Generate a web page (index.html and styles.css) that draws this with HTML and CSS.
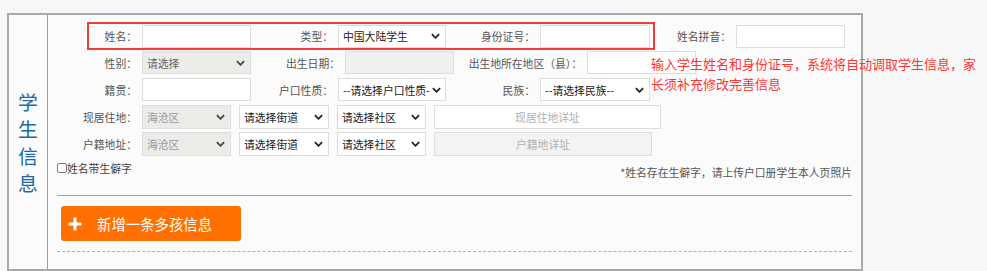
FILE: index.html
```html
<!DOCTYPE html>
<html lang="zh-CN">
<head>
<meta charset="utf-8">
<title>学生信息</title>
<link rel="stylesheet" href="styles.css">
</head>
<body>
<div class="page">
  <div class="panel">
    <div class="side"><span class="side-title">学生信息</span></div>
    <div class="main">
      <div class="row row-1">
        <div class="highlight">
          <label class="lbl w53">姓名：</label><input class="field w109" type="text">
          <label class="lbl w87">类型：</label>
          <div class="sel w108"><span class="sel-text">中国大陆学生</span><svg class="chev" viewBox="0 0 10 6"><path d="M1 1l4 4 4-4"/></svg></div>
          <label class="lbl w94">身份证号：</label><input class="field w110" type="text">
        </div>
        <label class="lbl w81">姓名拼音：</label><input class="field w109" type="text">
      </div>

      <div class="row row-2">
        <label class="lbl w85">性别：</label>
        <div class="sel sel-dis w109"><span class="sel-text">请选择</span><svg class="chev" viewBox="0 0 10 6"><path d="M1 1l4 4 4-4"/></svg></div>
        <label class="lbl w94">出生日期：</label><input class="field field-dis w109" type="text" disabled>
        <label class="lbl w133">出生地所在地区（县）：</label><input class="field w109" type="text">
      </div>

      <div class="row row-3">
        <label class="lbl w85">籍贯：</label><input class="field w109" type="text">
        <label class="lbl w87">户口性质：</label>
        <div class="sel sel-tight w108"><span class="sel-text">--请选择户口性质-</span><svg class="chev" viewBox="0 0 10 6"><path d="M1 1l4 4 4-4"/></svg></div>
        <label class="lbl w94">民族：</label>
        <div class="sel w110"><span class="sel-text">--请选择民族--</span><svg class="chev" viewBox="0 0 10 6"><path d="M1 1l4 4 4-4"/></svg></div>
      </div>

      <div class="row row-4 tall">
        <label class="lbl w85">现居住地：</label>
        <div class="sel sel-dis sel-muted w89"><span class="sel-text">海沧区</span><svg class="chev" viewBox="0 0 10 6"><path d="M1 1l4 4 4-4"/></svg></div>
        <div class="sel w90 gap"><span class="sel-text">请选择街道</span><svg class="chev" viewBox="0 0 10 6"><path d="M1 1l4 4 4-4"/></svg></div>
        <div class="sel w89 gap"><span class="sel-text">请选择社区</span><svg class="chev" viewBox="0 0 10 6"><path d="M1 1l4 4 4-4"/></svg></div>
        <input class="field center w227 gap" type="text" placeholder="现居住地详址">
      </div>

      <div class="row row-5 tall">
        <label class="lbl w85">户籍地址：</label>
        <div class="sel sel-dis sel-muted w89"><span class="sel-text">海沧区</span><svg class="chev" viewBox="0 0 10 6"><path d="M1 1l4 4 4-4"/></svg></div>
        <div class="sel w90 gap"><span class="sel-text">请选择街道</span><svg class="chev" viewBox="0 0 10 6"><path d="M1 1l4 4 4-4"/></svg></div>
        <div class="sel w89 gap"><span class="sel-text">请选择社区</span><svg class="chev" viewBox="0 0 10 6"><path d="M1 1l4 4 4-4"/></svg></div>
        <input class="field field-dis2 center w218 gap" type="text" placeholder="户籍地详址" disabled>
      </div>

      <div class="row-6">
        <label class="check"><input class="checkbox" type="checkbox">姓名带生僻字</label>
        <span class="note">*姓名存在生僻字，请上传户口册学生本人页照片</span>
      </div>

      <div class="divider"></div>

      <button class="add-btn" type="button">
        <svg class="plus" viewBox="0 0 14 14"><path d="M7 0.5v13M0.5 7h13"/></svg>
        <span>新增一条多孩信息</span>
      </button>

      <div class="dashed"></div>
    </div>
    <div class="hint">输入学生姓名和身份证号，系统将自动调取学生信息，家<br>长须补充修改完善信息</div>
  </div>
</div>
</body>
</html>
```

FILE: styles.css
```css
* {
  box-sizing: border-box;
}

html,
body {
  margin: 0;
  padding: 0;
}

body {
  background: #f7f7f7;
  font-family: "Noto Sans CJK SC", "Noto Sans", sans-serif;
  font-size: 10.8px;
  color: #555;
}

.page {
  padding: 13px 0 0 7px;
}

.panel {
  position: relative;
  display: flex;
  width: 856px;
  height: 258px;
  border: 2px solid #aaa;
  background: #fbfbfb;
}

.side {
  width: 39px;
  flex: none;
  border-right: 1px solid #9e9e9e;
  display: flex;
  align-items: center;
  justify-content: center;
}

.side-title {
  width: 20px;
  font-size: 19.8px;
  line-height: 27px;
  color: #1b6aa3;
  text-align: center;
}

.main {
  flex: 1;
  padding: 7px 9px 0 9px;
}

.row {
  display: flex;
  align-items: center;
}

.row-2 { margin-top: 1px; }
.row-3 { margin-top: 4px; }
.row-4 { margin-top: 4px; }
.row-5 { margin-top: 3px; }

.highlight {
  display: flex;
  align-items: center;
  margin-left: 30px;
  height: 28px;
  padding-right: 3px;
  border: 2px solid #f43a3a;
}

.lbl {
  flex: none;
  text-align: right;
  padding-right: 5px;
  line-height: 16px;
  white-space: nowrap;
  color: #555;
}

.w53 { width: 53px; }
.w81 { width: 81px; }
.w85 { width: 85px; }
.w87 { width: 87px; }
.w89 { width: 89px; }
.w90 { width: 90px; }
.w94 { width: 94px; }
.w108 { width: 108px; }
.w109 { width: 109px; }
.w110 { width: 110px; }
.w133 { width: 133px; }
.w218 { width: 218px; }
.w227 { width: 227px; }

.field {
  flex: none;
  height: 23px;
  margin: 0;
  padding: 0 4px;
  border: 1px solid #ddd;
  background: #fff;
  font: inherit;
  color: #222;
  outline: none;
}

.field::placeholder {
  color: #b0b0b0;
}

.field-dis {
  background: #f0f0f0;
}

.field-dis2 {
  background: #f3f3f3;
}

.center {
  text-align: center;
}

.sel {
  flex: none;
  display: flex;
  align-items: center;
  justify-content: space-between;
  height: 23px;
  padding: 0 5px 0 4px;
  border: 1px solid #ddd;
  background: #fff;
  color: #1a1a1a;
  overflow: hidden;
}

.sel-tight {
  padding-right: 4px;
}

.sel-dis {
  background: #ebebe7;
  color: #666;
}

.sel-muted {
  color: #9a9a9a;
}

.sel-text {
  flex: 1;
  min-width: 0;
  white-space: nowrap;
  line-height: 16px;
}

.chev {
  flex: none;
  width: 9px;
  height: 6px;
  fill: none;
  stroke: #222;
  stroke-width: 2;
}

.sel-dis .chev {
  stroke: #444;
}

.tall .sel,
.tall .field {
  height: 24px;
}

.row .gap {
  margin-left: 8px;
}

.row-6 {
  display: flex;
  justify-content: space-between;
  align-items: flex-start;
  margin-top: 4px;
  height: 20px;
}

.check {
  display: flex;
  align-items: center;
  line-height: 16px;
  color: #444;
}

.checkbox {
  appearance: none;
  -webkit-appearance: none;
  width: 10px;
  height: 10px;
  margin: 0;
  border: 1px solid #777;
  border-radius: 2px;
  background: #fff;
}

.note {
  margin-top: 4px;
  line-height: 16px;
  color: #555;
}

.divider {
  margin-top: 15px;
  border-top: 1px solid #a0a0a0;
}

.add-btn {
  display: flex;
  align-items: center;
  width: 180px;
  height: 35px;
  margin: 10px 0 0 4px;
  padding: 0 0 0 7px;
  border: none;
  border-radius: 3px;
  background: #ff7000;
  color: #fff;
  font-family: "Noto Sans CJK SC", "Noto Sans", sans-serif;
  font-size: 14.4px;
  line-height: 18px;
}

.plus {
  width: 14px;
  height: 14px;
  margin-right: 15px;
  fill: none;
  stroke: #fff;
  stroke-width: 3;
}

.dashed {
  margin-top: 10px;
  border-top: 1px dashed #b0b0b0;
}

.hint {
  position: absolute;
  left: 642px;
  top: 39px;
  font-size: 13px;
  line-height: 20px;
  color: #ff3535;
  white-space: nowrap;
  z-index: 2;
}
```
